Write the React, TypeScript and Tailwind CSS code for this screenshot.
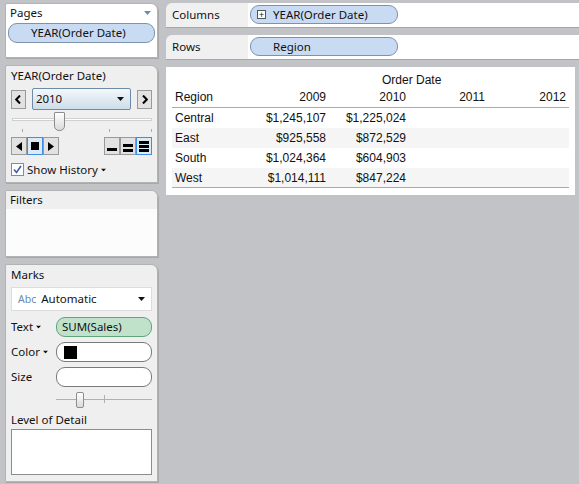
import React from 'react';

const ui = "font-['Noto_Sans','Open_Sans',sans-serif]";
const tbl = "font-['Liberation_Sans',Arial,sans-serif]";

function Caret({ className = '' }: { className?: string }) {
  return (
    <svg width="7" height="4" viewBox="0 0 7 4" className={className}>
      <path d="M0 0h7L3.5 4z" fill="#111" />
    </svg>
  );
}

function Panel({ children, className = '' }: { children: React.ReactNode; className?: string }) {
  return (
    <div className={`border border-[#b3b3b3] rounded-tr-[7px] rounded-tl-[2px] shadow-[1px_1px_0_#a8a8a8] ${className}`}>
      {children}
    </div>
  );
}

function Shelf({ label, pill, plus }: { label: string; pill: string; plus?: boolean }) {
  return (
    <div className="flex h-[25px] rounded-tl-[6px] border-b border-[#a6a6a6] overflow-hidden">
      <div className="w-[82px] bg-[#f0f0f0] pl-[6px] pt-[3px] text-[11.5px] text-[#111]">{label}</div>
      <div className="flex-1 bg-white pl-[2px] pt-[2px]">
        <div className="w-[148px] h-[19px] rounded-[9px] border border-[#7b93ad] bg-[#c9dbf3] flex items-center text-[11.5px] text-[#111]">
          {plus ? (
            <>
              <span className="ml-[6px] mr-[7px] w-[9px] h-[9px] border border-[#555] bg-white flex items-center justify-center text-[9px] leading-none">+</span>
              <span>{pill}</span>
            </>
          ) : (
            <span className="ml-[22px]">{pill}</span>
          )}
        </div>
      </div>
    </div>
  );
}

const rows = [
  { r: 'Central', a: '$1,245,107', b: '$1,225,024' },
  { r: 'East', a: '$925,558', b: '$872,529' },
  { r: 'South', a: '$1,024,364', b: '$604,903' },
  { r: 'West', a: '$1,014,111', b: '$847,224' },
];

function SqBtn({ children, active }: { children: React.ReactNode; active?: boolean }) {
  return (
    <div className={`w-[16px] h-[18px] flex items-center justify-center border ${active ? 'border-[#3d8ee6] bg-[#dceaf8]' : 'border-[#9a9a9a] bg-[#e2e2e2]'}`}>
      {children}
    </div>
  );
}

function Chevron({ dir }: { dir: 'l' | 'r' }) {
  return (
    <svg width="6" height="9" viewBox="0 0 6 9">
      <path d={dir === 'l' ? 'M5 0.5L1.2 4.5L5 8.5' : 'M1 0.5L4.8 4.5L1 8.5'} stroke="#000" strokeWidth="2" fill="none" />
    </svg>
  );
}

export default function App() {
  return (
    <div className={`w-[579px] h-[484px] bg-[#c2c3c7] flex gap-[8px] pl-[5px] pt-[3px] overflow-hidden ${ui}`}>
      {/* Left column */}
      <div className="w-[153px] flex flex-col gap-[7px]">
        {/* Pages */}
        <Panel className="bg-white h-[55px]">
          <div className="flex items-center justify-between pl-[4px] pr-[6px] h-[18px] text-[11.5px] text-[#111]">
            <span>Pages</span>
            <svg width="7" height="4" viewBox="0 0 7 4"><path d="M0 0h7L3.5 4z" fill="#6a8bb5" /></svg>
          </div>
          <div className="mx-[2px] mt-[1px] h-[20px] rounded-[9px] border border-[#7b93ad] bg-[#c9dbf3] text-[11.5px] text-[#111] pl-[22px] leading-[18px]">
            YEAR(Order Date)
          </div>
        </Panel>

        {/* Year control */}
        <Panel className="bg-[#efefef] h-[118px] px-[5px]">
          <div className="text-[11.5px] text-[#111] pt-[1px] h-[20px]">YEAR(Order Date)</div>
          <div className="flex items-center gap-[6px] mt-[2px]">
            <div className="w-[15px] h-[19px] border border-[#9a9a9a] bg-[#e2e2e2] flex items-center justify-center"><Chevron dir="l" /></div>
            <div className="w-[100px] h-[22px] rounded-[2px] border border-[#6d8aa8] bg-gradient-to-b from-[#f4f8fb] to-[#cddde9] flex items-center justify-between pl-[3px] pr-[6px] text-[11.5px] text-[#111]">
              <span>2010</span>
              <Caret />
            </div>
            <div className="w-[15px] h-[19px] border border-[#9a9a9a] bg-[#e2e2e2] flex items-center justify-center"><Chevron dir="r" /></div>
          </div>
          {/* slider */}
          <div className="relative h-[22px] mt-[2px]">
            <div className="absolute left-[1px] right-[0px] top-[6px] h-[3px] border border-[#d0d0d0] bg-white" />
            <div className="absolute left-[43px] top-[0px] w-[11px] h-[19px] bg-gradient-to-b from-white to-[#dadada] border border-[#8c8c8c] rounded-b-[5px] rounded-t-[1px]" />
            <div className="absolute left-[11px] top-[17px] w-[1px] h-[3px] bg-[#aaa]" />
            <div className="absolute left-[98px] top-[17px] w-[1px] h-[3px] bg-[#aaa]" />
            <div className="absolute left-[140px] top-[17px] w-[1px] h-[3px] bg-[#aaa]" />
          </div>
          <div className="flex items-center justify-between mt-[3px]">
            <div className="flex">
              <SqBtn>
                <svg width="6" height="9" viewBox="0 0 6 9"><path d="M6 0v9L0 4.5z" fill="#000" /></svg>
              </SqBtn>
              <SqBtn active>
                <div className="w-[8px] h-[8px] bg-black" />
              </SqBtn>
              <SqBtn>
                <svg width="6" height="9" viewBox="0 0 6 9"><path d="M0 0v9l6-4.5z" fill="#000" /></svg>
              </SqBtn>
            </div>
            <div className="flex">
              <SqBtn>
                <div className="w-[10px] h-[3px] bg-black mt-[6px]" />
              </SqBtn>
              <SqBtn>
                <div className="flex flex-col gap-[2px] mt-[3px]">
                  <div className="w-[10px] h-[3px] bg-black" />
                  <div className="w-[10px] h-[3px] bg-black" />
                </div>
              </SqBtn>
              <SqBtn active>
                <div className="flex flex-col gap-[1px]">
                  <div className="w-[10px] h-[3px] bg-black" />
                  <div className="w-[10px] h-[3px] bg-black" />
                  <div className="w-[10px] h-[3px] bg-black" />
                </div>
              </SqBtn>
            </div>
          </div>
          <div className="flex items-center mt-[6px] text-[11.5px] text-[#111]">
            <div className="w-[13px] h-[13px] border border-[#8c8c8c] bg-white flex items-center justify-center">
              <svg width="9" height="9" viewBox="0 0 9 9"><path d="M1 4.5l2.5 3L8 1" stroke="#3b5fa8" strokeWidth="1.6" fill="none" /></svg>
            </div>
            <span className="ml-[3px]">Show History</span>
            <Caret className="ml-[2px] scale-75" />
          </div>
        </Panel>

        {/* Filters */}
        <Panel className="bg-[#fcfcfc] h-[67px] overflow-hidden">
          <div className="bg-[#efefef] h-[18px] pl-[4px] text-[11.5px] text-[#111] leading-[18px]">Filters</div>
        </Panel>

        {/* Marks */}
        <Panel className="bg-[#efefef] h-[218px] px-[5px]">
          <div className="text-[11.5px] text-[#111] h-[22px] leading-[20px]">Marks</div>
          <div className="h-[24px] bg-white border border-[#dcdcdc] flex items-center justify-between pl-[6px] pr-[6px] text-[11.5px] text-[#111]">
            <span><span className="text-[#6b89ad] mr-[5px] text-[10.5px]">Abc</span>Automatic</span>
            <Caret />
          </div>
          <div className="flex items-center mt-[6px] h-[20px]">
            <div className="w-[45px] text-[11.5px] text-[#111] flex items-center">Text<Caret className="ml-[2px] scale-75" /></div>
            <div className="flex-1 h-[20px] rounded-[9px] border border-[#63a37a] bg-[#c0e2cb] text-[11.5px] text-[#111] pl-[5px] leading-[18px]">SUM(Sales)</div>
          </div>
          <div className="flex items-center mt-[5px] h-[20px]">
            <div className="w-[45px] text-[11.5px] text-[#111] flex items-center">Color<Caret className="ml-[2px] scale-75" /></div>
            <div className="flex-1 h-[20px] rounded-[9px] border border-[#7a7a7a] bg-white flex items-center pl-[7px]">
              <div className="w-[13px] h-[13px] bg-black" />
            </div>
          </div>
          <div className="flex items-center mt-[5px] h-[20px]">
            <div className="w-[45px] text-[11.5px] text-[#111]">Size</div>
            <div className="flex-1 h-[20px] rounded-[9px] border border-[#7a7a7a] bg-white" />
          </div>
          <div className="relative h-[22px] ml-[45px] mt-[2px]">
            <div className="absolute left-0 right-0 top-[10px] h-[1px] bg-[#b0b0b0]" />
            <div className="absolute left-[48px] top-[6px] w-[1px] h-[8px] bg-[#b0b0b0]" />
            <div className="absolute left-[20px] top-[3px] w-[8px] h-[16px] bg-gradient-to-b from-white to-[#dadada] border border-[#8c8c8c] rounded-[2px]" />
          </div>
          <div className="text-[11.5px] text-[#111] mt-[1px] h-[16px] leading-[16px]">Level of Detail</div>
          <div className="mt-[1px] h-[46px] border border-[#8c8c8c] bg-white" />
        </Panel>
      </div>

      {/* Right column */}
      <div className="flex-1 flex flex-col">
        <Shelf label="Columns" pill="YEAR(Order Date)" plus />
        <div className="h-[7px]" />
        <Shelf label="Rows" pill="Region" />
        <div className="h-[7px]" />
        <div className={`bg-white mr-[4px] h-[128px] px-[6px] pt-[4px] text-[12px] text-[#111] ${tbl}`}>
          <div className="h-[16px] pl-[210px]">Order Date</div>
          <div className="flex h-[21px] items-center border-b border-[#aaa]">
            <div className="w-[82px] pl-[3px]">Region</div>
            <div className="w-[72px] text-right">2009</div>
            <div className="w-[80px] text-right">2010</div>
            <div className="w-[79px] text-right">2011</div>
            <div className="w-[81px] text-right">2012</div>
          </div>
          {rows.map((row, i) => (
            <div key={row.r} className={`flex h-[20px] items-center ${i % 2 === 1 ? 'bg-[#f5f5f5]' : ''} ${i === rows.length - 1 ? 'border-b border-[#aaa]' : ''}`}>
              <div className="w-[82px] pl-[3px]">{row.r}</div>
              <div className="w-[72px] text-right">{row.a}</div>
              <div className="w-[80px] text-right">{row.b}</div>
              <div className="flex-1" />
            </div>
          ))}
        </div>
      </div>
    </div>
  );
}
